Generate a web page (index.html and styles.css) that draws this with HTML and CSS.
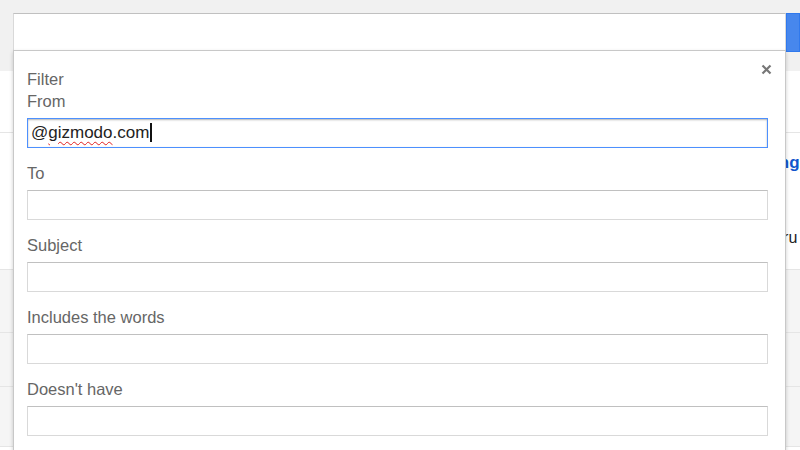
FILE: index.html
```html
<!DOCTYPE html>
<html lang="en">
<head>
    <meta charset="UTF-8">
    <title>Filter</title>
    <link rel="stylesheet" href="styles.css">
</head>
<body>
    <div class="header">
        <div class="search-row">
            <div class="search-box"></div>
            <button class="search-btn"></button>
        </div>
    </div>
    <div class="mail">
        <div class="row row-tabs"></div>
        <div class="row row-tall">
            <span class="link">Settings</span>
            <span class="sender">Our ru</span>
        </div>
        <div class="row row-grey"></div>
        <div class="row row-small"></div>
        <div class="row row-mid"></div>
    </div>

    <!-- Filter dropdown -->
    <div class="filter">
        <svg class="close" width="11" height="11" viewBox="0 0 11 11">
            <path d="M1.5 1.5 L9.5 9.5 M9.5 1.5 L1.5 9.5" stroke="#777" stroke-width="2.2" fill="none"/>
        </svg>
        <div class="title">Filter</div>
        <div class="field first">
            <label>From</label>
            <div class="text-input focused">@<span class="typo">gizmodo</span>.com<span class="caret"></span></div>
        </div>
        <div class="field">
            <label>To</label>
            <input type="text" class="text-input">
        </div>
        <div class="field">
            <label>Subject</label>
            <input type="text" class="text-input">
        </div>
        <div class="field">
            <label>Includes the words</label>
            <input type="text" class="text-input">
        </div>
        <div class="field">
            <label>Doesn't have</label>
            <input type="text" class="text-input">
        </div>
    </div>
</body>
</html>
```

FILE: styles.css
```css
body {
    margin: 0;
    font-family: "Liberation Sans", Arial, sans-serif;
    background-color: #fff;
    overflow: hidden;
    height: 450px;
    position: relative;
}
.header {
    background-color: #f1f1f1;
    height: 71px;
    padding-top: 13px;
    box-sizing: border-box;
}
.search-row {
    display: flex;
    margin-left: 13px;
    height: 39px;
}
.search-box {
    flex-grow: 1;
    background-color: #fff;
    border: 1px solid #d9d9d9;
    border-top-color: #c0c0c0;
}
.search-btn {
    width: 14px;
    border: 1px solid #3079ed;
    background-color: #4787ed;
    padding: 0;
}
.row {
    border-bottom: 1px solid #e5e5e5;
    position: relative;
}
.row-tabs {
    height: 61px;
}
.row-tall {
    height: 136px;
}
.row-grey {
    height: 62px;
    background-color: #f5f5f5;
}
.row-small {
    height: 53px;
    background-color: #f5f5f5;
}
.row-mid {
    height: 59px;
    background-color: #f5f5f5;
}
.link {
    position: absolute;
    left: 742px;
    top: 20px;
    color: #15c;
    font-weight: bold;
    font-size: 17px;
}
.sender {
    position: absolute;
    left: 752px;
    top: 96px;
    color: #222;
    font-size: 16px;
}
.filter {
    position: absolute;
    left: 13px;
    top: 50px;
    width: 773px;
    height: 420px;
    box-sizing: border-box;
    background-color: #fff;
    border: 1px solid #c8c8c8;
    box-shadow: 0 2px 4px rgba(0,0,0,0.2);
    padding: 18px 17px 0 13px;
    color: #666;
    font-size: 16.5px;
    line-height: 22px;
}
.close {
    position: absolute;
    top: 13px;
    right: 13px;
}
.title,
.field label {
    position: relative;
    top: -1px;
}
.field {
    display: flex;
    flex-direction: column;
    margin-top: 15px;
}
.field.first {
    margin-top: 0;
}
.field label {
    margin-bottom: 5px;
}
.text-input {
    display: block;
    height: 30px;
    box-sizing: border-box;
    border: 1px solid #d9d9d9;
    border-top-color: #c0c0c0;
    padding: 0 3px;
    font-family: "Liberation Sans", Arial, sans-serif;
    font-size: 16.5px;
    color: #222;
    margin: 0;
    width: 100%;
    outline: none;
}
.text-input.focused {
    border: 1px solid #4d90fe;
    box-shadow: inset 0 1px 2px rgba(0,0,0,0.3);
    line-height: 28px;
    font-size: 17px;
}
.typo {
    text-decoration: underline wavy #e02020;
    text-decoration-thickness: 1px;
    text-underline-offset: 3px;
}
.caret {
    display: inline-block;
    width: 2px;
    height: 19px;
    background-color: #111;
    vertical-align: -4px;
    margin-left: 1px;
}
```
